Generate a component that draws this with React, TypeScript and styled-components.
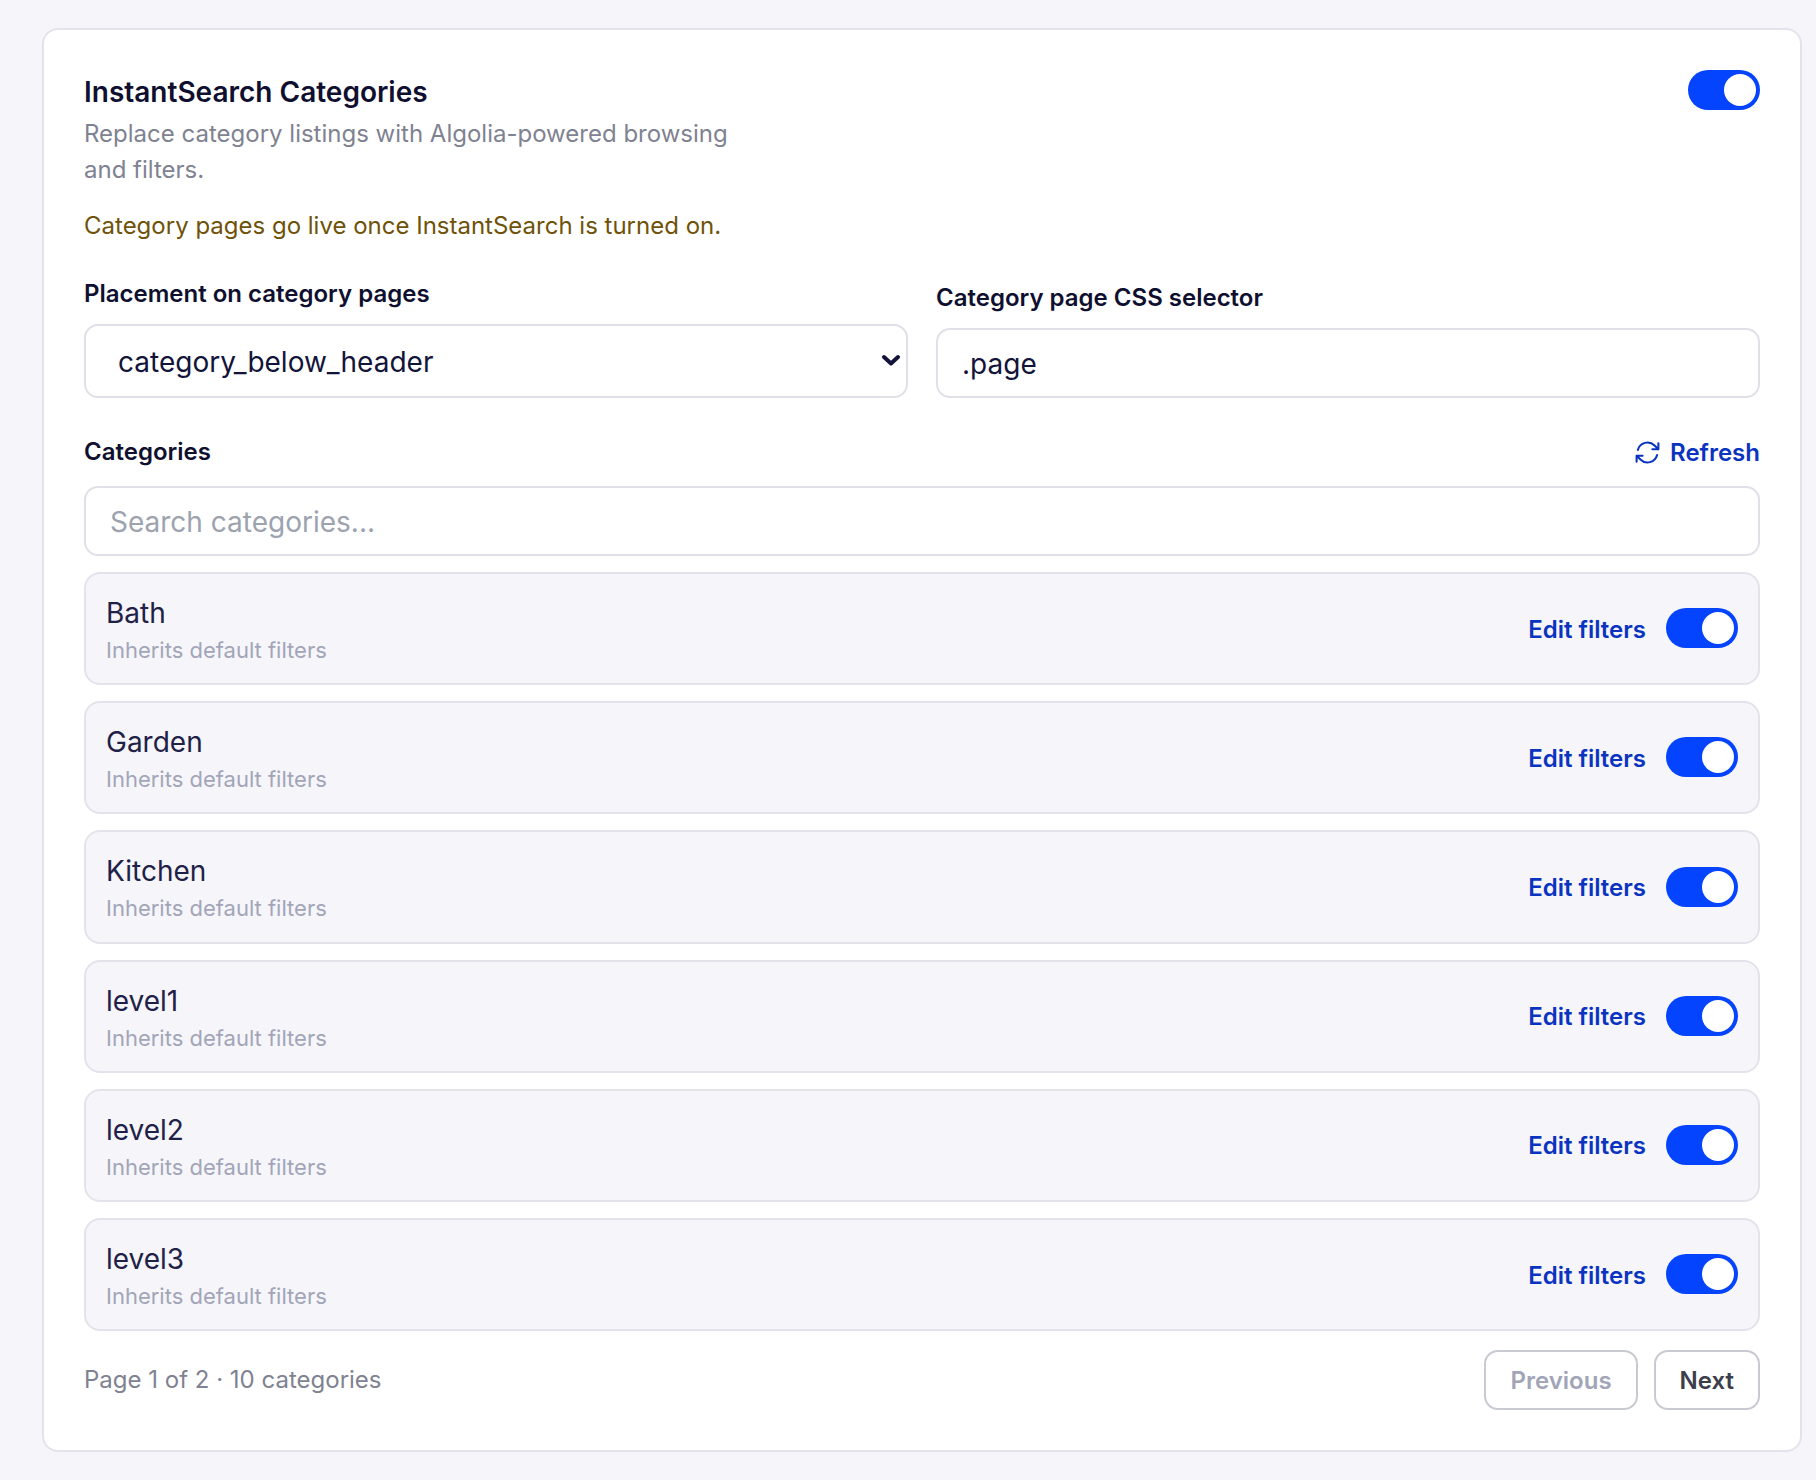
import React from 'react';
import styled, { createGlobalStyle } from 'styled-components';

const Global = createGlobalStyle`
  html, body { margin: 0; padding: 0; background: #f5f5fa; }
  * { box-sizing: border-box; }
  body { font-family: Inter, "Liberation Sans", sans-serif; }
`;
const Page = styled.div`
  width: 1816px; height: 1480px; padding: 28px 14px 0 42px;
`;
const Card = styled.section`
  background: #fff; border: 2px solid #e3e3ec; border-radius: 16px;
  padding: 40px; display: flex; flex-direction: column;
`;
const Head = styled.div`display: flex; justify-content: space-between; align-items: flex-start;`;
const Title = styled.h2`margin: 0; padding-top: 1px; font-size: 28px; line-height: 42px; font-weight: 600; color: #0f1030;`;
const Desc = styled.p`margin: 3px 0 0; width: 672px; font-size: 24px; line-height: 36px; color: #7f8291;`;
const Note = styled.p`margin: 20px 0 0; font-size: 24px; line-height: 36px; color: #6f5208;`;
const Track = styled.span`
  display: inline-flex; align-items: center; justify-content: flex-end; flex: none;
  width: 72px; height: 40px; border-radius: 20px; background: #0444ff; padding: 4px;
`;
const Knob = styled.span`width: 32px; height: 32px; border-radius: 50%; background: #fff;`;
const Fields = styled.div`display: grid; grid-template-columns: 1fr 1fr; gap: 28px; margin-top: 32px; align-items: end;`;
const Field = styled.div`display: flex; flex-direction: column;`;
const Label = styled.label`font-size: 24px; line-height: 36px; font-weight: 600; color: #0f1030; margin-bottom: 12px;`;
const SelectWrap = styled.div`position: relative;`;
const Select = styled.select`
  appearance: none; display: block; width: 100%; height: 74px; border: 2px solid #e0e0e8; border-radius: 14px; background: #fff;
  font: 400 28px Inter, sans-serif; color: #13143a; padding: 2px 32px 0;
`;
const Chevron = styled.svg`
  position: absolute; right: 7px; top: 30px; width: 20px; height: 12px; pointer-events: none;
`;
const Input = styled.input`
  display: block; height: 70px; border: 2px solid #e0e0e8; border-radius: 14px; background: #fff;
  font: 400 28px Inter, sans-serif; color: #13143a; padding: 2px 24px 0; width: 100%;
  &::placeholder { color: #9ca3af; opacity: 1; }
`;
const CatHead = styled.div`display: flex; justify-content: space-between; align-items: center; margin-top: 36px; margin-bottom: 16px;`;
const CatLabel = styled.span`font-size: 24px; line-height: 36px; font-weight: 600; color: #0f1030;`;
const Refresh = styled.button`
  border: 0; background: none; padding: 1px 0 0; display: flex; align-items: center; gap: 8px;
  font: 600 24px Inter, sans-serif; color: #0a34c0;
`;
const List = styled.div`display: flex; flex-direction: column; gap: 16px; margin-top: 16px;`;
const Row = styled.div`
  border: 2px solid #e3e3ec; border-radius: 16px; background: #f5f5fa;
  display: flex; align-items: center; justify-content: space-between; padding: 18px 20px 16px;
`;
const Name = styled.div`font-size: 28px; line-height: 42px; color: #1f2147;`;
const Sub = styled.div`font-size: 22px; line-height: 33.2px; color: #a2a5b8;`;
const RowRight = styled.div`display: flex; align-items: center; gap: 20px; margin-bottom: 3px;`;
const EditLink = styled.a`margin-top: 2px; font-size: 24px; font-weight: 600; color: #0a34c0;`;
const Footer = styled.div`display: flex; justify-content: space-between; align-items: center; margin-top: 19px;`;
const Count = styled.span`margin-bottom: 2px; font-size: 24px; color: #7f8291;`;
const Pager = styled.div`display: flex; gap: 16px;`;
const PageBtn = styled.button<{ $off?: boolean }>`
  height: 60px; padding: 0 24px; border: 2px solid #c8cad2; border-radius: 14px; background: #fff;
  font: 600 24px Inter, sans-serif; color: ${p => (p.$off ? '#a2a5b8' : '#3c3e4c')};
`;

const cats = ['Bath', 'Garden', 'Kitchen', 'level1', 'level2', 'level3'];

export default function App() {
  return (
    <Page>
      <Global />
      <Card>
        <Head>
          <div>
            <Title>InstantSearch Categories</Title>
            <Desc>Replace category listings with Algolia-powered browsing and filters.</Desc>
          </div>
          <Track><Knob /></Track>
        </Head>
        <Note>Category pages go live once InstantSearch is turned on.</Note>
        <Fields>
          <Field>
            <Label>Placement on category pages</Label>
            <SelectWrap>
              <Select defaultValue="category_below_header"><option>category_below_header</option></Select>
              <Chevron viewBox="0 0 20 12" fill="none" stroke="#13143a" strokeWidth="4" strokeLinecap="round" strokeLinejoin="round"><path d="M3 3l7 6.5L17 3" /></Chevron>
            </SelectWrap>
          </Field>
          <Field>
            <Label>Category page CSS selector</Label>
            <Input defaultValue=".page" />
          </Field>
        </Fields>
        <CatHead>
          <CatLabel>Categories</CatLabel>
          <Refresh>
            <svg width="29" height="29" viewBox="0 0 24 24" fill="none" stroke="currentColor" strokeWidth="1.7" strokeLinecap="round" strokeLinejoin="round"><path d="M16.023 9.348h4.992v-.001M2.985 19.644v-4.992m0 0h4.992m-4.993 0l3.181 3.183a8.25 8.25 0 0013.803-3.7M4.031 9.865a8.25 8.25 0 0113.803-3.7l3.181 3.182m0-4.991v4.99"/></svg>
            Refresh
          </Refresh>
        </CatHead>
        <Input placeholder="Search categories..." />
        <List>
          {cats.map(c => (
            <Row key={c}>
              <div><Name>{c}</Name><Sub>Inherits default filters</Sub></div>
              <RowRight><EditLink>Edit filters</EditLink><Track><Knob /></Track></RowRight>
            </Row>
          ))}
        </List>
        <Footer>
          <Count>Page 1 of 2 · 10 categories</Count>
          <Pager><PageBtn $off>Previous</PageBtn><PageBtn>Next</PageBtn></Pager>
        </Footer>
      </Card>
    </Page>
  );
}
